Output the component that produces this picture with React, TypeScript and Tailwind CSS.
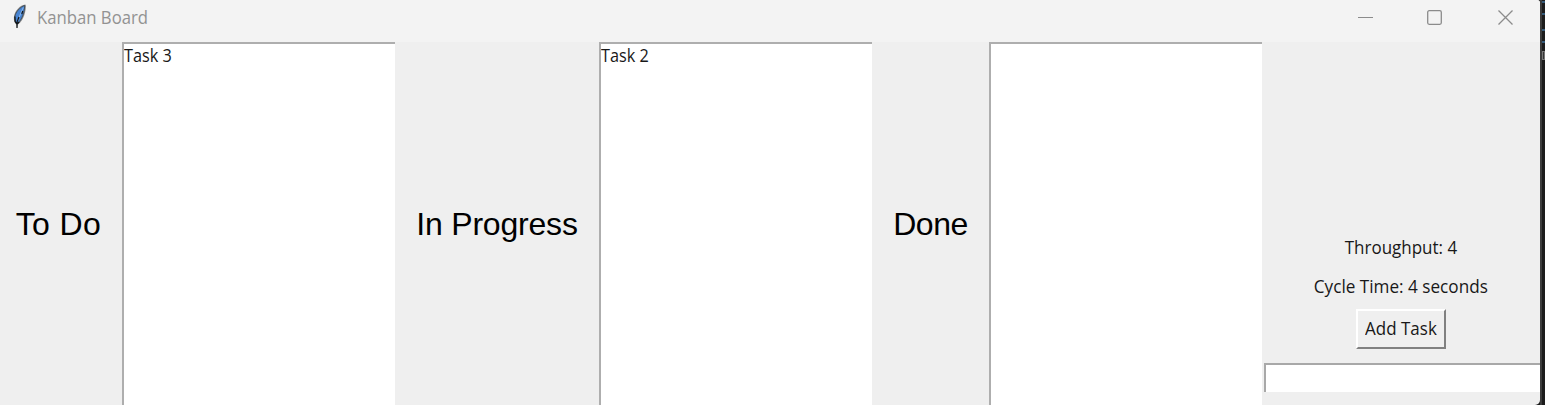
const ui = "font-['Open_Sans','Noto_Sans',sans-serif] whitespace-nowrap";

function Feather() {
  return (
    <svg width="14" height="26" viewBox="0 0 14 26" className="block">
      <path d="M12.4 1.5 C7 2 1.6 8 0.9 14 C0.6 18 1.6 20 3.3 21.3 L4 25.5 L5 21.5 C8 19.5 12.7 13 12.9 3 Z" fill="#8a8a8a" />
      <path d="M11.7 2.4 C7 4 2.6 9 1.9 13.5 C1.6 17 2.4 19.4 3.8 20.8 C7 19 11.4 12.5 11.7 2.4Z" fill="#4683d1" stroke="#3a424a" strokeWidth="0.8" />
      <path d="M10.3 4.5 L7.5 11 L4.2 19" fill="none" stroke="#8ab8ee" strokeWidth="1" />
      <path d="M4 25 L4 19 L6 14 M1.9 13.5 L2.2 18.5 L4 21 L6.2 19 M9.7 8 L8.8 11" fill="none" stroke="#101418" strokeWidth="1.2" />
    </svg>
  );
}

function Column({ title, task, labelStyle }: { title: string; task?: string; labelStyle: string }) {
  return (
    <>
      <h2 className={`${labelStyle} flex shrink-0 items-center justify-center whitespace-nowrap pt-px font-['Liberation_Sans',Arial,sans-serif] leading-9 text-black`}>
        {title}
      </h2>
      <ul className="h-[363px] w-[273px] shrink-0 border-l-2 border-t-2 border-[#aeaeae] bg-white">
        {task && <li className={`${ui} -mt-px origin-left scale-x-[0.93] text-[17.5px] leading-6 text-[#181818]`}>{task}</li>}
      </ul>
    </>
  );
}

export default function App() {
  return (
    <div className="flex h-[405px] w-[1545px] overflow-hidden bg-[#1c1c1c]">
      <main className="h-[405px] w-[1540px] shrink-0 overflow-hidden rounded-tr-[3px] rounded-br-[5px] bg-[#efefef]">
        <header className="flex h-[42px] items-start bg-[#f3f3f3]">
          <div className="ml-[13px] mt-[3px] w-6"><Feather /></div>
          <h1 className={`${ui} mt-[5px] origin-left scale-x-[0.955] text-[17.5px] leading-6 text-[#929292]`}>Kanban Board</h1>
          <svg className="ml-auto mr-[26px] mt-[9px]" width="156" height="17" viewBox="0 0 156 17" fill="none" stroke="#8b8b8b">
            <path d="M0 8.5H15" />
            <rect x="69.7" y="1.7" width="13.6" height="13.6" rx="1.5" strokeWidth="1.3" />
            <path d="M140.5 1.5 154.5 15.5 M154.5 1.5 140.5 15.5" strokeWidth="1.3" />
          </svg>
        </header>
        <div className="flex h-[363px]">
          <Column title="To Do" task="Task 3" labelStyle="w-[122px] pr-[5px] text-[32px] tracking-[0.4px]" />
          <Column title="In Progress" task="Task 2" labelStyle="w-[204px] text-[32px] tracking-[-0.2px]" />
          <Column title="Done" labelStyle="w-[117px] text-[32px] tracking-[-0.5px]" />
          <aside className={`${ui} flex w-[278px] shrink-0 flex-col items-center text-[17.5px] leading-6 text-[#181818]`}>
            <p className="mt-[193px] scale-x-[0.97]">Throughput: 4</p>
            <p className="mt-[15px] scale-x-[0.98]">Cycle Time: 4 seconds</p>
            <button className="mt-[11px] flex h-10 w-[90px] items-center justify-center border-2 border-b-[#808080] border-l-white border-r-[#808080] border-t-white bg-[#efefef] pb-0.5">
              <span className="scale-x-[0.97]">Add Task</span>
            </button>
            <input aria-label="Task name" className="mt-[14px] h-[29px] w-[276px] translate-x-px border-l-2 border-t-2 border-[#a8a8a8] bg-white px-1 outline-none" />
          </aside>
        </div>
      </main>
      <div className="flex w-[5px] flex-col border-l-2 border-[#3c3c3c]">
        <i className="mt-px h-0.5 bg-[#355b7a]" />
        <i className="mt-2.5 h-0.5 bg-[#355b7a]" />
        <i className="mt-3.5 h-0.5 bg-[#355b7a]" />
        <i className="mt-2.5 h-0.5 bg-[#355b7a]" />
        <i className="mt-2 h-[9px] border border-[#777777] bg-[#343434]" />
      </div>
    </div>
  );
}
